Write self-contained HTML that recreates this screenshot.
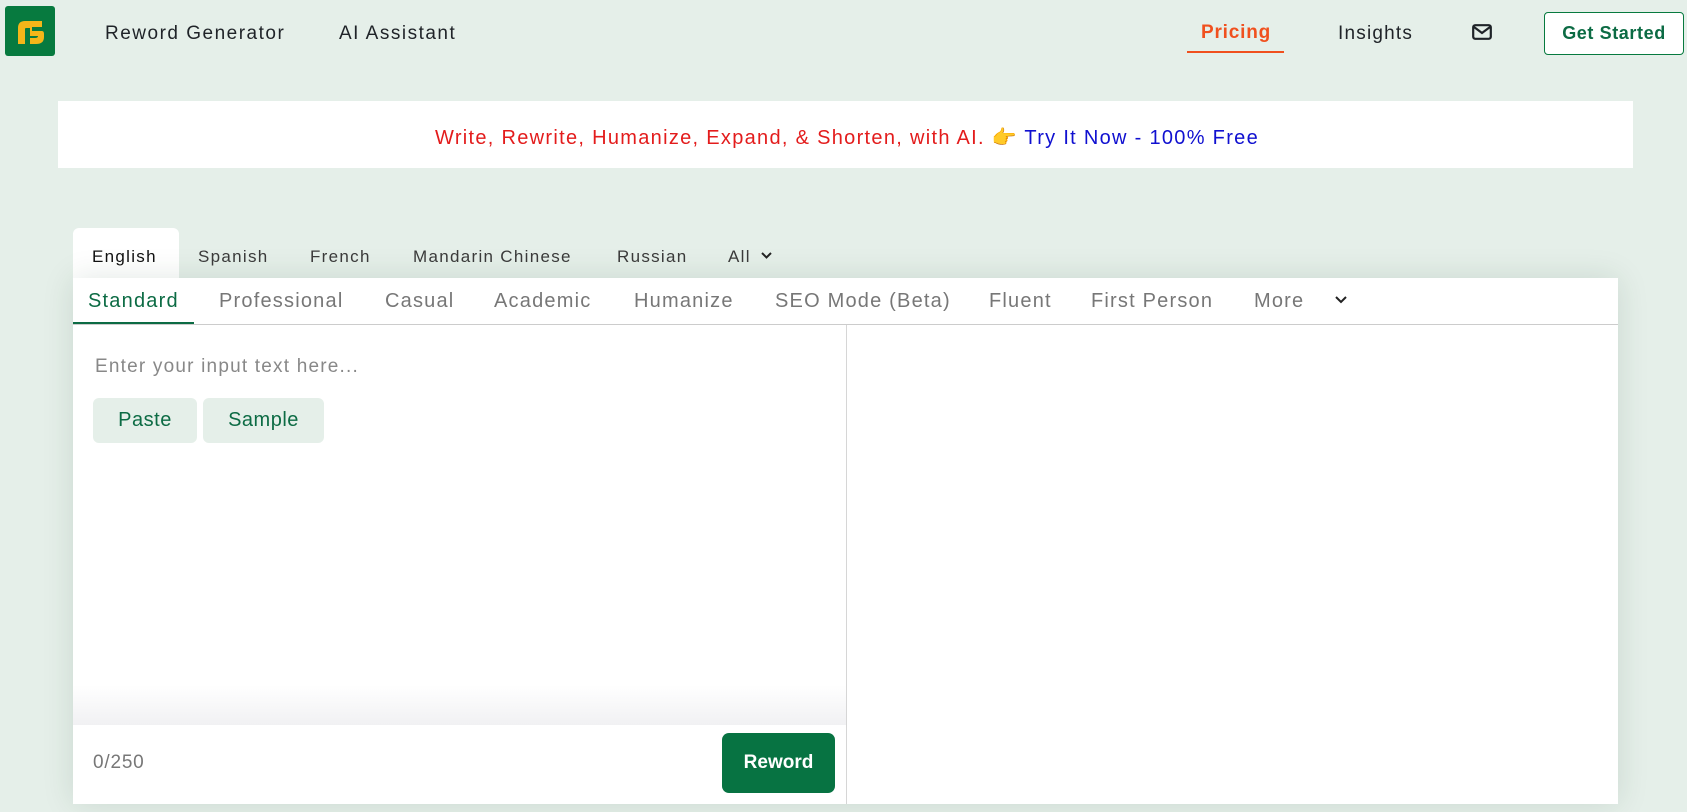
<!DOCTYPE html>
<html><head><meta charset="utf-8"><style>
*{margin:0;padding:0;box-sizing:border-box}
body{width:1687px;height:812px;background:#e5efe9;font-family:"Liberation Sans",sans-serif;position:relative;overflow:hidden}
.a{position:absolute;white-space:nowrap}
.nav{font-size:19px;color:#1f2328;top:23px;letter-spacing:1.5px}
.lt{font-size:17px;color:#3a3a3a;top:247px;letter-spacing:1.3px}
.mt{font-size:20px;color:#777;top:290px;letter-spacing:1.2px}
</style></head><body>
<div class="a" style="left:5px;top:6px;width:50px;height:50px;background:#077a3f;border-radius:3px">
<svg width="50" height="50" viewBox="0 0 50 50"><path d="M13 38V22q0-7 7-7h5v7h-4q-1 0-1 1v15z" fill="#f4b619"/><path d="M25 15h12v6h-10v4h10q2 0 2 3v3q0 7-8 7h-6v-6h5q3 0 3-2h-8z" fill="#f4b619"/></svg></div>
<div class="a nav" style="left:105px">Reword Generator</div>
<div class="a nav" style="left:339px">AI Assistant</div>
<div class="a nav" style="left:1201px;color:#f0501e;font-weight:bold;top:22px;letter-spacing:.8px">Pricing</div>
<div class="a" style="left:1187px;top:51px;width:97px;height:2px;background:#f0501e"></div>
<div class="a nav" style="left:1338px;letter-spacing:1.2px">Insights</div>
<svg class="a" style="left:1472px;top:24px" width="20" height="16" viewBox="0 0 20 16"><rect x="1.2" y="1.2" width="17.6" height="13.6" rx="2" fill="none" stroke="#1f2328" stroke-width="2.2"/><path d="M2 3l8 6 8-6" fill="none" stroke="#1f2328" stroke-width="2.2"/></svg>
<div class="a" style="left:1544px;top:12px;width:140px;height:43px;border:1.5px solid #077a3f;border-radius:4px;background:#fff;color:#0c6b44;font-weight:bold;font-size:18px;text-align:center;line-height:40px;letter-spacing:.6px">Get Started</div>
<div class="a" style="left:58px;top:101px;width:1575px;height:67px;background:#fff"></div>
<div class="a" style="left:435px;top:125px;font-size:20px;letter-spacing:1.3px"><span style="color:#e31c1c">Write, Rewrite, Humanize, Expand, &amp; Shorten, with AI.</span> <span style="font-family:'DejaVu Sans'">👉</span> <span style="color:#1010d0">Try It Now - 100% Free</span></div>
<div class="a" style="left:73px;top:228px;width:106px;height:52px;background:#fff;border-radius:6px 6px 0 0"></div>
<div class="a" style="left:73px;top:278px;width:1545px;height:526px;background:#fff;box-shadow:0 0 30px rgba(0,60,30,.12)"></div>
<div class="a lt" style="left:92px;color:#111">English</div>
<div class="a lt" style="left:198px">Spanish</div>
<div class="a lt" style="left:310px">French</div>
<div class="a lt" style="left:413px">Mandarin Chinese</div>
<div class="a lt" style="left:617px">Russian</div>
<div class="a lt" style="left:728px">All</div>
<svg class="a" style="left:760px;top:251px" width="13" height="9"><path d="M2 2l4.5 4.5L11 2" fill="none" stroke="#222" stroke-width="2"/></svg>
<div class="a mt" style="left:88px;color:#0c6b44">Standard</div>
<div class="a mt" style="left:219px">Professional</div>
<div class="a mt" style="left:385px">Casual</div>
<div class="a mt" style="left:494px">Academic</div>
<div class="a mt" style="left:634px">Humanize</div>
<div class="a mt" style="left:775px">SEO Mode (Beta)</div>
<div class="a mt" style="left:989px">Fluent</div>
<div class="a mt" style="left:1091px">First Person</div>
<div class="a mt" style="left:1254px">More</div>
<svg class="a" style="left:1334px;top:295px" width="14" height="10"><path d="M2 2l5 5 5-5" fill="none" stroke="#222" stroke-width="2"/></svg>
<div class="a" style="left:73px;top:324px;width:1545px;height:1px;background:#ccc"></div>
<div class="a" style="left:73px;top:322px;width:121px;height:2px;background:#0c6b44"></div>
<div class="a" style="left:846px;top:325px;width:1px;height:479px;background:#d6d6d6"></div>
<div class="a" style="left:95px;top:356px;font-size:19px;color:#888;letter-spacing:1.2px">Enter your input text here...</div>
<div class="a" style="left:93px;top:398px;width:104px;height:45px;background:#e5efe9;border-radius:6px;color:#0c6b44;font-size:20px;text-align:center;line-height:45px;letter-spacing:.5px">Paste</div>
<div class="a" style="left:203px;top:398px;width:121px;height:45px;background:#e5efe9;border-radius:6px;color:#0c6b44;font-size:20px;text-align:center;line-height:45px;letter-spacing:.5px">Sample</div>
<div class="a" style="left:73px;top:685px;width:773px;height:40px;background:linear-gradient(#fff,#f1f1f3)"></div>
<div class="a" style="left:93px;top:752px;font-size:19px;color:#777;letter-spacing:.8px">0/250</div>
<div class="a" style="left:722px;top:733px;width:113px;height:60px;background:#077342;border-radius:7px;color:#fff;font-weight:bold;font-size:19px;text-align:center;line-height:60px">Reword</div>
</body></html>
